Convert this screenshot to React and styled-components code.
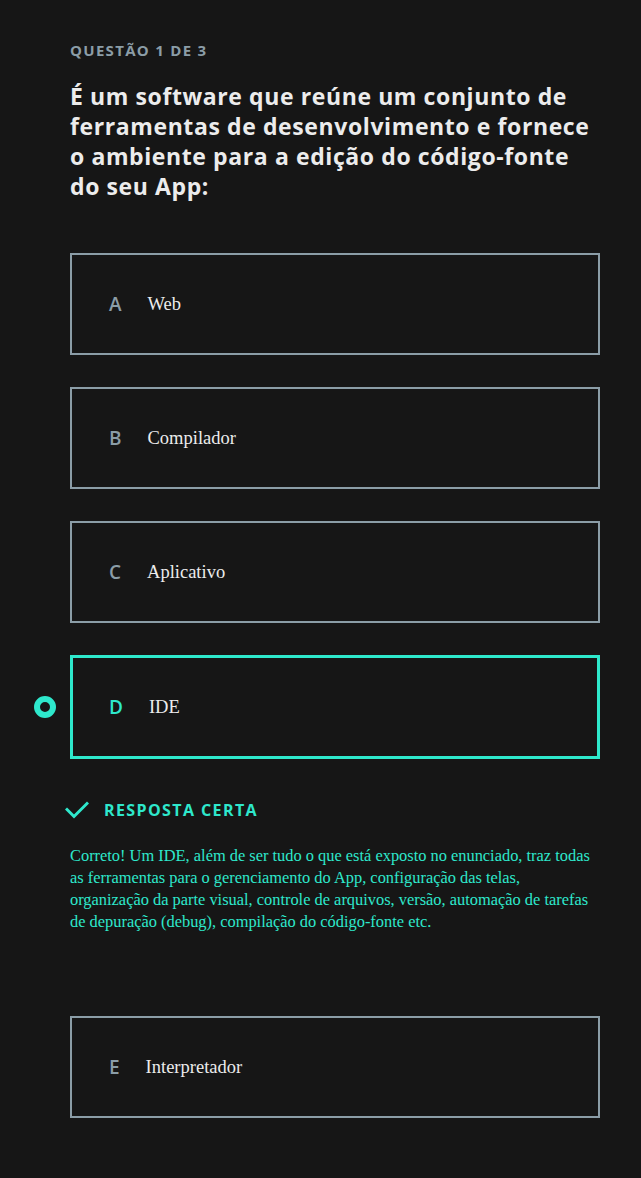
import styled, { createGlobalStyle } from "styled-components";

const options = [
  { letter: "A", text: "Web" },
  { letter: "B", text: "Compilador" },
  { letter: "C", text: "Aplicativo" },
  { letter: "D", text: "IDE", selected: true },
  { letter: "E", text: "Interpretador" },
];

const App = () => {
  return (
    <>
      <GlobalStyle />
      <Page>
        <Counter>QUESTÃO 1 DE 3</Counter>
        <Question>
          É um software que reúne um conjunto de ferramentas de
          desenvolvimento e fornece o ambiente para a edição do código-fonte
          do seu App:
        </Question>
        <OptionList>
          {options.map((opt) => (
            <OptionGroup key={opt.letter}>
              <Option selected={opt.selected}>
                {opt.selected && <Radio />}
                <Letter selected={opt.selected}>{opt.letter}</Letter>
                <OptionText>{opt.text}</OptionText>
              </Option>
              {opt.selected && (
                <Feedback>
                  <FeedbackTitle>
                    <svg width="24" height="18" viewBox="0 0 24 18" fill="none">
                      <path
                        d="M2 8.5 L9 15.5 L22 2.5"
                        stroke="#2ee8cc"
                        strokeWidth="3"
                        strokeLinecap="square"
                      />
                    </svg>
                    RESPOSTA CERTA
                  </FeedbackTitle>
                  <FeedbackText>
                    Correto! Um IDE, além de ser tudo o que está exposto no
                    enunciado, traz todas as ferramentas para o gerenciamento
                    do App, configuração das telas, organização da parte
                    visual, controle de arquivos, versão, automação de tarefas
                    de depuração (debug), compilação do código-fonte etc.
                  </FeedbackText>
                </Feedback>
              )}
            </OptionGroup>
          ))}
        </OptionList>
      </Page>
    </>
  );
};
export default App;

const GlobalStyle = createGlobalStyle`
    body {
      margin: 0;
      background: #161616;
      font-family: "Open Sans", sans-serif;
    }
  `,
  Page = styled.div`
    width: 600px;
    min-height: 1178px;
    box-sizing: border-box;
    padding: 41px 0 0 70px;
    background: #161616;
  `,
  Counter = styled.div`
    font-family: "Open Sans", sans-serif;
    font-weight: 700;
    font-size: 15px;
    line-height: 18px;
    color: #8b9da7;
    letter-spacing: 1.3px;
  `,
  Question = styled.h1`
    margin: 22px 0 0;
    font-family: "Open Sans", sans-serif;
    font-weight: 700;
    font-size: 23px;
    line-height: 30px;
    color: #ececec;
    letter-spacing: 0.6px;
  `,
  OptionList = styled.div`
    display: flex;
    flex-direction: column;
    gap: 32px;
    margin-top: 52px;
  `,
  OptionGroup = styled.div`
    display: flex;
    flex-direction: column;
  `,
  Option = styled.div`
    position: relative;
    display: flex;
    align-items: center;
    height: ${(p) => (p.selected ? "104px" : "102px")};
    box-sizing: border-box;
    border: ${(p) => (p.selected ? "3px solid #2ee8cc" : "2px solid #8b9da7")};
    padding-left: ${(p) => (p.selected ? "36px" : "37px")};
  `,
  Radio = styled.span`
    position: absolute;
    left: -39px;
    top: 50%;
    width: 22px;
    height: 22px;
    margin-top: -11px;
    box-sizing: border-box;
    border-radius: 50%;
    border: 6px solid #2ee8cc;
  `,
  Letter = styled.span`
    margin-right: 26px;
    font-family: "Open Sans", sans-serif;
    font-weight: 600;
    font-size: 19px;
    color: ${(p) => (p.selected ? "#2ee8cc" : "#8b9da7")};
  `,
  OptionText = styled.span`
    font-family: "Liberation Serif", serif;
    font-size: 18.5px;
    color: #ececec;
  `,
  Feedback = styled.div`
    display: flex;
    flex-direction: column;
    margin-top: 40px;
    margin-bottom: 51px;
  `,
  FeedbackTitle = styled.div`
    display: flex;
    align-items: center;
    gap: 15px;
    margin-left: -5px;
    font-family: "Open Sans", sans-serif;
    font-weight: 700;
    font-size: 16px;
    letter-spacing: 1.4px;
    color: #2ee8cc;
  `,
  FeedbackText = styled.p`
    margin: 24px 0 0;
    font-family: "Liberation Serif", serif;
    font-size: 16.4px;
    line-height: 22px;
    color: #2ee8cc;
  `;
